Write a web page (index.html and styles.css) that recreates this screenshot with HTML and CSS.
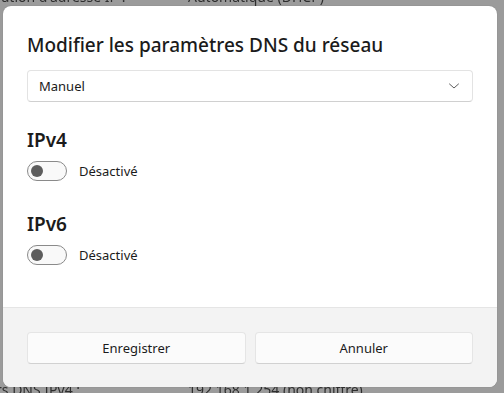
FILE: index.html
```html
<!DOCTYPE html>
<html>
    <head>
        <meta charset="utf-8">
        <link rel="stylesheet" href="styles.css">
    </head>
    <body>
        <div class='backdrop'>
            <div class='row top'>
                <span class='key'>ration d'adresse IP :</span>
                <span class='val'>Automatique (DHCP)</span>
            </div>
            <div class='row bottom'>
                <span class='key'>rs DNS IPv4 :</span>
                <span class='val'>192.168.1.254 (non chiffré)</span>
            </div>
        </div>

        <div class='dialog'>
            <div class='content'>
                <h1 class='title'>Modifier les paramètres DNS du réseau</h1>
                <div class='select'>
                    <span>Manuel</span>
                    <svg class='chevron' width="12" height="8" viewBox="0 0 12 8">
                        <path d="M1.5 2 L6 6 L10.5 2" fill="none" stroke="#5c5c5c" stroke-width="1" stroke-linecap="round" stroke-linejoin="round"/>
                    </svg>
                </div>

                <h2 class='section'>IPv4</h2>
                <div class='switch-row'>
                    <span class='switch'><span class='knob'></span></span>
                    <span class='switch-label'>Désactivé</span>
                </div>

                <h2 class='section'>IPv6</h2>
                <div class='switch-row'>
                    <span class='switch'><span class='knob'></span></span>
                    <span class='switch-label'>Désactivé</span>
                </div>
            </div>
            <div class='footer'>
                <button class='btn'>Enregistrer</button>
                <button class='btn'>Annuler</button>
            </div>
        </div>
    </body>
</html>
```

FILE: styles.css
```css
body {
    margin: 0;
    width: 504px;
    height: 393px;
    overflow: hidden;
    background: #9b9b9b;
    font-family: 'Noto Sans', 'Open Sans', sans-serif;
    position: relative;
}

.backdrop {
    height: 393px;
    display: flex;
    flex-direction: column;
    justify-content: space-between;
    color: #2e2e2e;
    font-size: 14px;
    filter: blur(0.4px);
}

.row {
    display: flex;
    height: 18px;
    line-height: 18px;
}

.row.top {
    margin-top: -12px;
}

.row.bottom {
    margin-bottom: -6px;
}

.key {
    width: 192px;
    margin-left: -4px;
}

.dialog {
    position: absolute;
    left: 3px;
    top: 6px;
    width: 494px;
    height: 381px;
    background: #ffffff;
    border-radius: 8px;
    overflow: hidden;
    display: flex;
    flex-direction: column;
    box-shadow: 0 0 1px rgba(0, 0, 0, 0.3);
}

.content {
    flex: 1;
    padding: 23px 24px 0 24px;
}

.title {
    margin: 0;
    font-size: 19px;
    font-weight: 500;
    color: #1b1b1b;
    line-height: 32px;
}

.select {
    margin-top: 9px;
    height: 30px;
    border: 1px solid #e3e3e3;
    border-bottom-color: #d0d0d0;
    border-radius: 4px;
    display: flex;
    align-items: center;
    justify-content: space-between;
    padding: 0 12px 0 11px;
    font-size: 13px;
    color: #1b1b1b;
}

.section {
    margin: 26px 0 0 0;
    font-size: 19px;
    font-weight: 600;
    color: #1b1b1b;
    line-height: 24px;
}

.switch-row {
    margin-top: 9px;
    padding-bottom: 5px;
    display: flex;
    align-items: center;
    height: 20px;
}

.switch {
    box-sizing: border-box;
    width: 40px;
    height: 20px;
    border: 1px solid #8a8a8a;
    border-radius: 10px;
    background: #f9f9f9;
    display: flex;
    align-items: center;
    padding-left: 3px;
}

.knob {
    width: 12px;
    height: 12px;
    border-radius: 50%;
    background: #5d5d5d;
}

.switch-label {
    margin-left: 12px;
    font-size: 13px;
    color: #1b1b1b;
}

.footer {
    height: 80px;
    box-sizing: border-box;
    background: #f3f3f3;
    border-top: 1px solid #e5e5e5;
    display: flex;
    gap: 9px;
    padding: 24px 24px 0 24px;
}

.btn {
    flex: 1;
    height: 32px;
    border: 1px solid #e5e5e5;
    border-bottom-color: #d1d1d1;
    border-radius: 4px;
    background: #fbfbfb;
    font-family: inherit;
    font-size: 13px;
    color: #1b1b1b;
}
```
